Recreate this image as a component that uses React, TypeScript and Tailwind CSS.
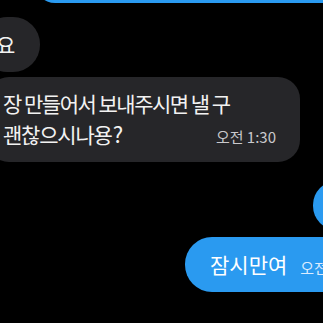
import React from "react";

export default function App() {
  const font = { fontFamily: '"Noto Sans CJK KR", "Noto Sans", sans-serif' };
  return (
    <div
      className="w-[323px] h-[323px] bg-black overflow-hidden flex flex-col"
      style={font}
    >
      {/* top blue bubble (cut off) */}
      <div className="h-[40px] -mt-[37px] ml-[35px] -mr-[30px] rounded-[20px] bg-[#2a9af0] shrink-0" />

      {/* 요 bubble */}
      <div className="mt-[14px] h-[55px] w-[60px] -ml-[20px] pl-[16px] rounded-[27px] bg-[#262629] flex items-center shrink-0">
        <span className="text-[21px] leading-none text-[#f2f2f2]">요</span>
      </div>

      {/* long gray bubble */}
      <div className="mt-[5px] h-[85px] w-[313px] -ml-[13px] pl-[16px] pr-[24px] pt-[11px] rounded-[22px] bg-[#262629] flex flex-col shrink-0">
        <div className="text-[21px] leading-[30px] tracking-[-1.5px] text-[#f2f2f2] whitespace-nowrap">
          장 만들어서 보내주시면 낼 구
        </div>
        <div className="flex items-baseline">
          <span className="text-[21px] leading-[30px] tracking-[-1.2px] text-[#f2f2f2] whitespace-nowrap">
            괜찮으시나용<span className="ml-[1px] text-[22px] tracking-normal">?</span>
          </span>
          <span className="ml-auto text-[15px] leading-none text-[#c9c9cc] whitespace-nowrap">
            오전 1:30
          </span>
        </div>
      </div>

      {/* right blue partial bubble */}
      <div className="mt-[19px] h-[49px] ml-[313px] w-[60px] rounded-[24px] bg-[#2a9af0] shrink-0" />

      {/* 잠시만여 bubble */}
      <div className="mt-[7px] h-[55px] ml-[185px] w-[200px] pl-[25px] rounded-[27px] bg-[#2a9af0] flex items-center gap-[13px] shrink-0">
        <span className="text-[21px] leading-none text-white whitespace-nowrap">잠시만여</span>
        <span className="text-[15px] leading-none text-[#dcecff] whitespace-nowrap mt-[6px]">
          오전 1:31
        </span>
      </div>
    </div>
  );
}
